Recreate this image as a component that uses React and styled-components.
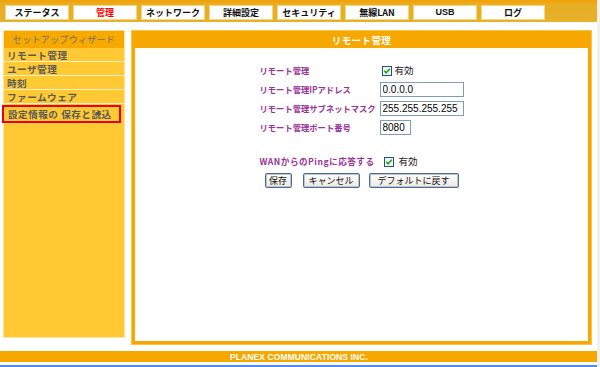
import React from "react";
import styled, { createGlobalStyle } from "styled-components";

const GlobalStyle = createGlobalStyle`
   html, body {
      margin: 0;
      padding: 0;
      background: #fff;
   }
   body {
      font-family: "Noto Sans CJK JP", "Liberation Sans", sans-serif;
   }
`;

const Page = styled.div`
   width: 597px;
   height: 367px;
   border-right: 3px solid #f2f2ec;
   display: flex;
   flex-direction: column;
   overflow: hidden;
`;

const TopBar = styled.div`
   height: 22px;
   box-sizing: border-box;
   padding: 5px 0 0 5px;
   display: flex;
   gap: 4px;
   background: linear-gradient(#f2a30c 0, #f2a30c 2px, #e8ad22 3px, #e6b12c 100%);
`;

const Tab = styled.div`
   width: 64px;
   height: 15px;
   box-sizing: border-box;
   background: #fff;
   border: 1px solid #f6d77c;
   display: flex;
   align-items: center;
   justify-content: center;
   font-size: 9px;
   font-weight: bold;
   line-height: 1;
   color: ${(p) => (p.$active ? "#ff0000" : "#111")};
   font-family: ${(p) => (p.$latin ? '"Liberation Sans", sans-serif' : "inherit")};
`;

const Body = styled.div`
   display: flex;
   align-items: flex-start;
   gap: 6px;
   margin-top: 8px;
   padding-left: 3px;
   height: 315px;
`;

const Sidebar = styled.div`
   width: 122px;
   height: 308px;
   box-sizing: border-box;
   background: #ffc934;
   border: 1px solid #ffe39a;
   display: flex;
   flex-direction: column;
`;

const SideHeader = styled.div`
   height: 17px;
   background: #f7a900;
   color: #707070;
   font-size: 9px;
   display: flex;
   align-items: center;
   justify-content: center;
   letter-spacing: 0.3px;
`;

const SideItem = styled.div`
   height: ${(p) => (p.$selected ? "14px" : "13px")};
   border-bottom: 1px solid #fff1c4;
   display: flex;
   align-items: center;
   padding-left: 3px;
   font-size: 9.6px;
   font-weight: bold;
   color: #5a5a5a;
   letter-spacing: 0.5px;
   white-space: nowrap;
   ${(p) =>
      p.$selected &&
      `
      border: 2px solid #e2001a;
      margin: 1px 3px 0 -2px;
      padding-left: 4px;
   `}
`;

const Panel = styled.div`
   width: 461px;
   height: 315px;
   box-sizing: border-box;
   background: #f7a800;
   border: 1px solid #ffc444;
   padding: 0 3px 3px;
   display: flex;
   flex-direction: column;
`;

const PanelTitle = styled.div`
   height: 17px;
   flex: none;
   display: flex;
   align-items: center;
   justify-content: center;
   color: #fff;
   font-size: 9.5px;
   font-weight: bold;
   letter-spacing: 0.4px;
`;

const Content = styled.div`
   flex: 1;
   background: #fff;
   padding-top: 13px;
   display: flex;
   justify-content: center;
`;

const Form = styled.div`
   width: 204px;
   display: flex;
   flex-direction: column;
`;

const Grid = styled.div`
   display: grid;
   grid-template-columns: 120px 84px;
   grid-auto-rows: 19px;
   align-items: center;
`;

const Label = styled.div`
   font-size: 8.3px;
   font-weight: bold;
   color: #993399;
   white-space: nowrap;
   line-height: 1;
`;

const Field = styled.div`
   display: flex;
   align-items: center;
   gap: 3px;
   padding-left: ${(p) => (p.$pad ? "2px" : "0")};
`;

const Input = styled.input`
   width: ${(p) => p.$w || "84px"};
   height: 15px;
   box-sizing: border-box;
   border: 1px solid #7f9db9;
   padding: 0 2px;
   margin: 0;
   font-family: "Liberation Sans", Arial, sans-serif;
   font-size: 10px;
   color: #000;
   outline: none;
`;

const Small = styled.span`
   font-size: 9.5px;
   color: #222;
   line-height: 1;
`;

const WanRow = styled.div`
   margin-top: 15px;
   height: 19px;
   display: flex;
   align-items: center;
   gap: 5px;
`;

const WanLabel = styled(Label)`
   font-size: 8.6px;
   letter-spacing: 0.5px;
   margin-right: 4px;
`;

const Buttons = styled.div`
   margin-top: 2px;
   display: flex;
   justify-content: center;
   align-items: center;
`;

const Button = styled.button`
   width: ${(p) => p.$w};
   height: 15px;
   box-sizing: border-box;
   margin-left: ${(p) => p.$gap || "0"};
   padding: 0;
   border: 1px solid #4f6a8c;
   border-radius: 2px;
   box-shadow: inset 0 0 0 1px #b9c6d6;
   background: linear-gradient(#fdfdfb, #eceae2);
   font-family: "Noto Sans CJK JP", sans-serif;
   font-size: 9px;
   color: #111;
   line-height: 1;
`;

const Footer = styled.div`
   margin-top: 6px;
   height: 11px;
   width: 598px;
   background: #f7a800;
   display: flex;
   align-items: center;
   justify-content: center;
   color: #fff;
   font-family: "Liberation Sans Narrow", "Liberation Sans", sans-serif;
   font-size: 8.5px;
   font-weight: bold;
   letter-spacing: 0.1px;
`;

const BlueLine = styled.div`
   margin-top: 3px;
   height: 2px;
   background: #4d8df2;
`;

const Check = () => (
   <svg width="10" height="10" viewBox="0 0 10 10">
      <rect x="0.5" y="0.5" width="9" height="9" fill="#f4f4f0" stroke="#1c5180" />
      <path d="M2.3 4.8 L4.1 6.8 L7.8 2.8" fill="none" stroke="#21a121" strokeWidth="1.6" />
   </svg>
);

const tabs = [
   { label: "ステータス" },
   { label: "管理", active: true },
   { label: "ネットワーク" },
   { label: "詳細設定" },
   { label: "セキュリティ" },
   { label: "無線LAN" },
   { label: "USB", latin: true },
   { label: "ログ" },
];

const menu = ["リモート管理", "ユーザ管理", "時刻", "ファームウェア"];

export default function App() {
   return (
      <>
         <GlobalStyle />
         <Page>
            <TopBar>
               {tabs.map((t) => (
                  <Tab key={t.label} $active={t.active} $latin={t.latin}>
                     {t.label}
                  </Tab>
               ))}
            </TopBar>
            <Body>
               <Sidebar>
                  <SideHeader>セットアップウィザード</SideHeader>
                  {menu.map((m) => (
                     <SideItem key={m}>{m}</SideItem>
                  ))}
                  <SideItem $selected>設定情報の 保存と読込</SideItem>
               </Sidebar>
               <Panel>
                  <PanelTitle>リモート管理</PanelTitle>
                  <Content>
                     <Form>
                        <Grid>
                           <Label>リモート管理</Label>
                           <Field $pad>
                              <Check />
                              <Small>有効</Small>
                           </Field>
                           <Label>リモート管理IPアドレス</Label>
                           <Field>
                              <Input defaultValue="0.0.0.0" />
                           </Field>
                           <Label>リモート管理サブネットマスク</Label>
                           <Field>
                              <Input defaultValue="255.255.255.255" />
                           </Field>
                           <Label>リモート管理ポート番号</Label>
                           <Field>
                              <Input $w="31px" defaultValue="8080" />
                           </Field>
                        </Grid>
                        <WanRow>
                           <WanLabel>WANからのPingに応答する</WanLabel>
                           <Check />
                           <Small>有効</Small>
                        </WanRow>
                        <Buttons>
                           <Button $w="27px">保存</Button>
                           <Button $w="57px" $gap="11px">
                              キャンセル
                           </Button>
                           <Button $w="90px" $gap="9px">
                              デフォルトに戻す
                           </Button>
                        </Buttons>
                     </Form>
                  </Content>
               </Panel>
            </Body>
            <Footer>PLANEX COMMUNICATIONS INC.</Footer>
            <BlueLine />
         </Page>
      </>
   );
}
